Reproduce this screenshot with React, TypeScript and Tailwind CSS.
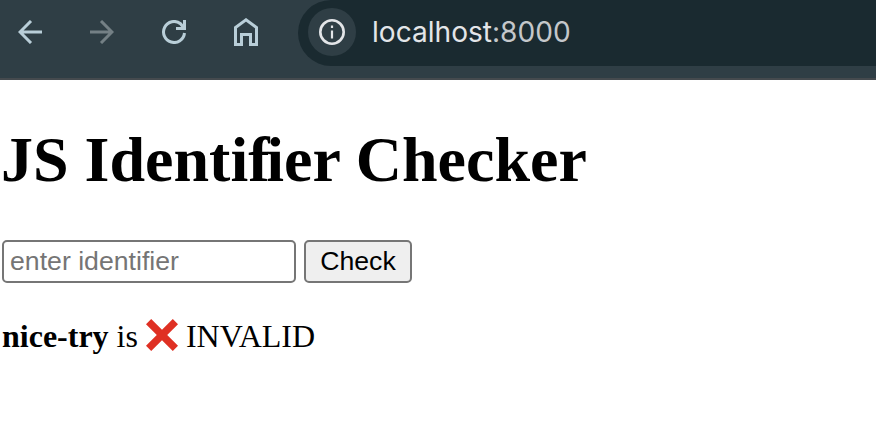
function BrowserToolbar() {
  return (
    <header className="flex h-20 items-start border-b-2 border-[#454a4e] bg-[#2f3e45]">
      <nav className="flex h-16 shrink-0 items-center gap-12 pr-10 pl-[18px] text-[#b9ced8]">
        <button aria-label="Back">
          <svg className="block" width="24" height="24" viewBox="0 0 24 24" fill="none" stroke="currentColor" strokeWidth="3">
            <path d="M24 12H2M13 1 2 12l11 11" />
          </svg>
        </button>
        <button aria-label="Forward" className="text-[#748085]">
          <svg className="block" width="24" height="24" viewBox="0 0 24 24" fill="none" stroke="currentColor" strokeWidth="3">
            <path d="M0 12h22M11 1l11 11-11 11" />
          </svg>
        </button>
        <button aria-label="Reload">
          <svg className="block" width="24" height="24" viewBox="0 0 24 24" fill="none" stroke="currentColor" strokeWidth="3">
            <path d="M22.5 13A10.5 10.5 0 1 1 18.5 3.7L22 8" />
            <path d="M22.5 0v8.5H14" />
          </svg>
        </button>
        <button aria-label="Home">
          <svg className="block" width="24" height="28" viewBox="0 0 24 28" fill="none" stroke="currentColor" strokeWidth="3">
            <path d="M1.5 26.5v-17L12 1.8l10.5 7.7v17h-6v-10h-9v10z" />
          </svg>
        </button>
      </nav>
      <div className="flex h-[66px] min-w-0 flex-1 items-start rounded-l-[33px] bg-[#1a2a30] pl-2.5">
        <span className="mt-2 flex size-12 shrink-0 items-center justify-center rounded-full bg-[#2f3e45] text-[#e3e5e8]">
          <svg width="26" height="26" viewBox="0 0 26 26" fill="none" stroke="currentColor">
            <circle cx="13" cy="13" r="11.7" strokeWidth="2.6" />
            <path d="M13 11.5v8M13 6.5v2.5" strokeWidth="2.2" />
          </svg>
        </span>
        <span className="ml-4 h-16 font-['Inter',sans-serif] text-[28.1px] leading-16 text-[#e3e5e8]">
          localhost<span className="text-[#c4c7ca]">:8000</span>
        </span>
      </div>
    </header>
  );
}

export default function App() {
  return (
    <div className="h-[428px] overflow-hidden bg-white font-['Liberation_Serif',serif] text-black">
      <BrowserToolbar />
      <main className="pt-[43px] pl-0.5">
        <h1 className="-ml-px text-[64px] leading-[74px] font-bold">
          JS Identi<span className="tracking-[-3.2px]">f</span>ier Checker
        </h1>
        <form className="mt-[43px] flex gap-2 font-['Liberation_Sans',sans-serif] text-[26.67px]" onSubmit={(e) => e.preventDefault()}>
          <input
            className="h-[43px] w-[294px] rounded-[5px] border-2 border-[#767676] bg-white px-1.5 placeholder:text-[#757575]"
            placeholder="enter identifier"
          />
          <button className="h-[43px] w-[108px] rounded-[5px] border-2 border-[#767676] bg-[#efefef] leading-[39px]">Check</button>
        </form>
        <p className="mt-[35px] flex h-9 items-center text-[32px] leading-9 whitespace-pre">
          <b>nice-try</b> is{' '}
          <svg className="mr-2 -mt-0.5 shrink-0" width="32" height="32" viewBox="0 0 32 32" aria-label="cross mark">
            <path d="M5.2 0 16 10.8 26.8 0 32 5.2 21.2 16 32 26.8 26.8 32 16 21.2 5.2 32 0 26.8 10.8 16 0 5.2z" fill="#df3023" />
          </svg>
          INVALID
        </p>
      </main>
    </div>
  );
}
